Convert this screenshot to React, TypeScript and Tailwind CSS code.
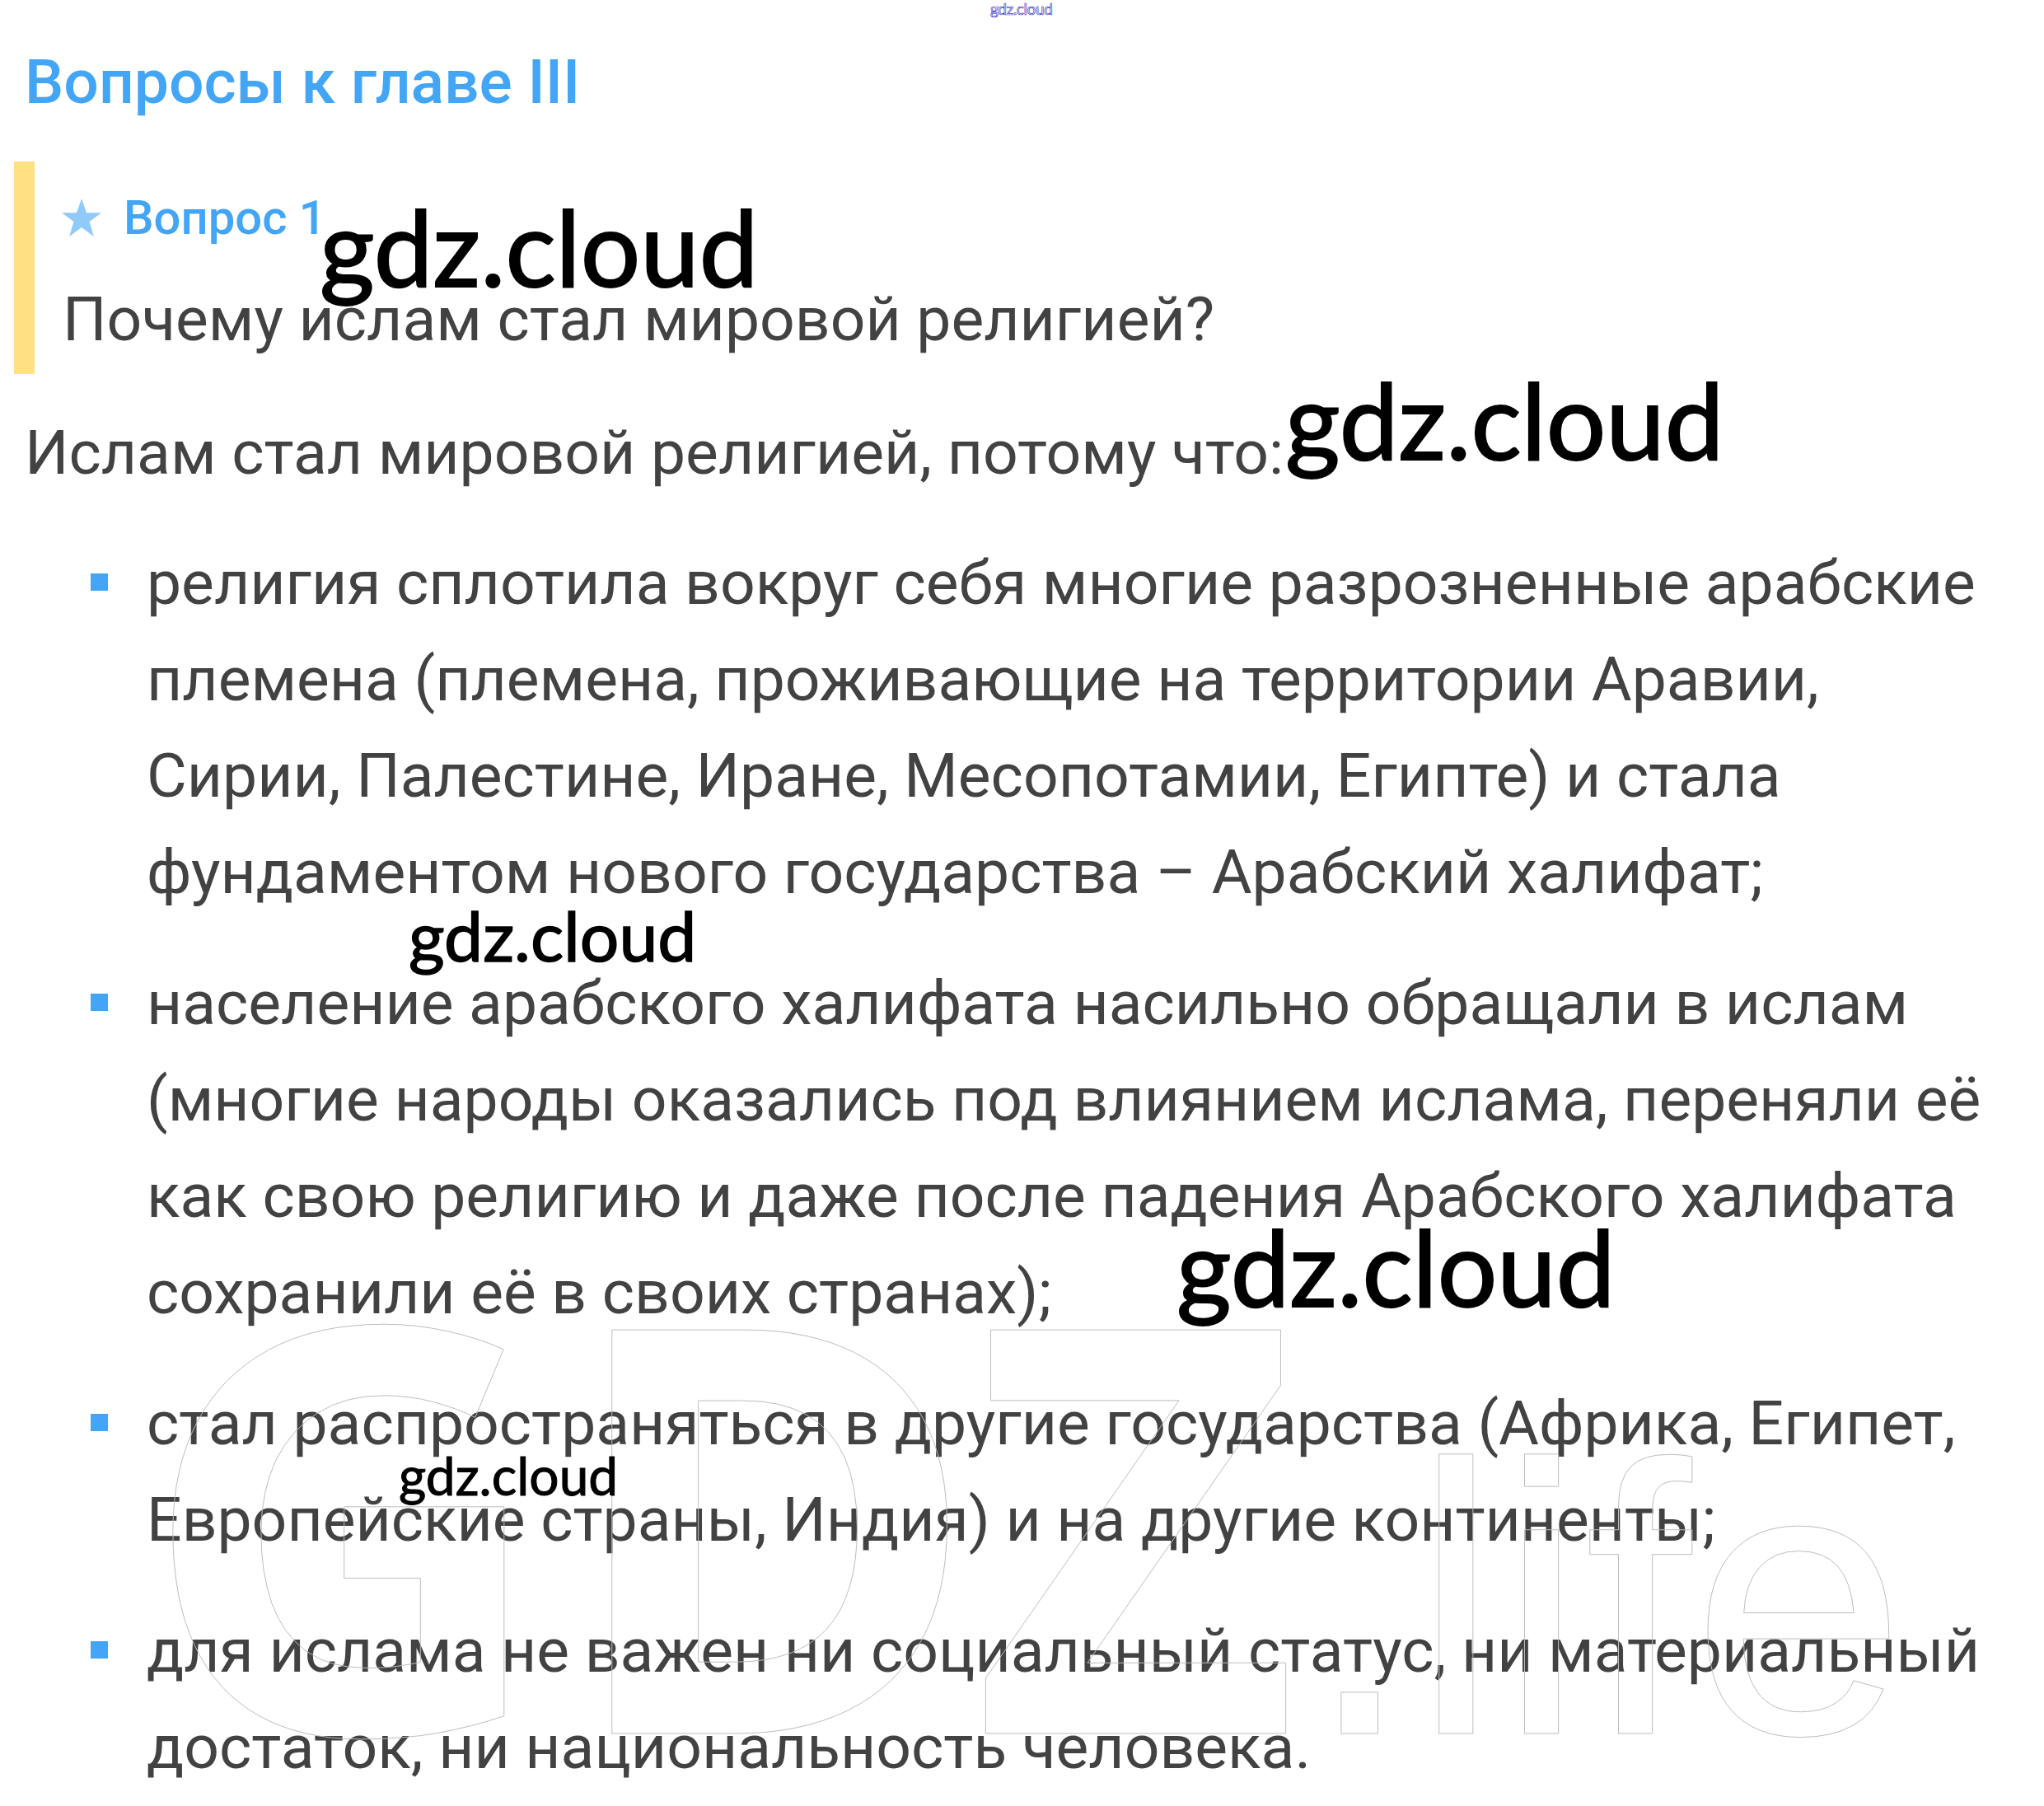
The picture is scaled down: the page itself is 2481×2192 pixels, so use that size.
export default function App() {
  const items = [
    ["религия сплотила вокруг себя многие разрозненные арабские", "племена (племена, проживающие на территории Аравии,", "Сирии, Палестине, Иране, Месопотамии, Египте) и стала", "фундаментом нового государства – Арабский халифат;"],
    ["население арабского халифата насильно обращали в ислам", "(многие народы оказались под влиянием ислама, переняли её", "как свою религию и даже после падения Арабского халифата", "сохранили её в своих странах);"],
    ["стал распространяться в другие государства (Африка, Египет,", "Европейские страны, Индия) и на другие континенты;"],
    ["для ислама не важен ни социальный статус, ни материальный", "достаток, ни национальность человека."],
  ];
  return (
    <div className="relative w-[2481px] h-[2192px] overflow-hidden bg-white font-['Roboto',sans-serif] text-[#424242] text-[75px] leading-[117px]">
      <div className="pt-[51px] pl-[30px] text-[#42a5f5] text-[75px] leading-[96px] font-medium">Вопросы к главе III</div>
      <div className="mt-[49px] ml-[17px] w-fit h-[258px] border-l-[25px] border-[#ffe082] pl-[34px] pr-0 pt-[36px]">
        <div className="flex items-center gap-[27px] text-[#42a5f5] text-[58px] leading-[64px] font-medium">
          <svg width="48" height="46" viewBox="0 0 24 23" className="ml-[-1px]"><path d="M12 0l3 8.6h9l-7.2 5.4 2.6 9L12 17.500l-7.400 5.500 2.600-9L0 8.600h9z" fill="#90caf9" /></svg>
          <span>Вопрос 1</span>
        </div>
        <div className="mt-[33px] whitespace-nowrap">Почему ислам стал мировой религией?</div>
      </div>
      <div className="pl-[30px] mt-[37px] whitespace-nowrap">Ислам стал мировой религией, потому что:</div>
      <ul className="mt-[41px] flex flex-col gap-[42px] pl-[110px]">
        {items.map((lines, i) => (
          <li key={i} className="flex">
            <span className="w-[21px] h-[21px] bg-[#42a5f5] mt-[47px] mr-[47px] shrink-0" />
            <div>
              {lines.map((l) => (
                <div key={l} className="whitespace-nowrap">{l}</div>
              ))}
            </div>
          </li>
        ))}
      </ul>
      <div className="absolute left-[170px] top-[1388px] text-[686px] leading-[900px] font-bold font-['Noto_Sans',sans-serif] text-transparent [-webkit-text-stroke:1px_#bdbdbd] whitespace-nowrap">
        <span className="mr-[18px]">G</span>DZ<span className="font-normal font-['Liberation_Sans',sans-serif] text-[468px] ml-[8px]">.life</span>
      </div>
      <div className="absolute left-[1202px] top-[-2px] text-[19px] leading-[26px] tracking-[-0.4px] text-white [-webkit-text-stroke:0.7px_#3a36c8] font-['Lato',sans-serif]">gdz.cloud</div>
      <div className="absolute left-[388px] top-[224px] text-[128px] leading-[150px] text-black [-webkit-text-stroke:2px_black] font-['Lato',sans-serif]">gdz.cloud</div>
      <div className="absolute left-[1560px] top-[434px] text-[128px] leading-[150px] text-black [-webkit-text-stroke:2px_black] font-['Lato',sans-serif]">gdz.cloud</div>
      <div className="absolute left-[1428px] top-[1462px] text-[128px] leading-[150px] text-black [-webkit-text-stroke:2px_black] font-['Lato',sans-serif]">gdz.cloud</div>
      <div className="absolute left-[496px] top-[1085px] text-[84px] leading-[100px] text-black [-webkit-text-stroke:1.5px_black] font-['Lato',sans-serif]">gdz.cloud</div>
      <div className="absolute left-[484px] top-[1754px] text-[64px] leading-[74px] text-black [-webkit-text-stroke:1px_black] font-['Lato',sans-serif]">gdz.cloud</div>
    </div>
  );
}
